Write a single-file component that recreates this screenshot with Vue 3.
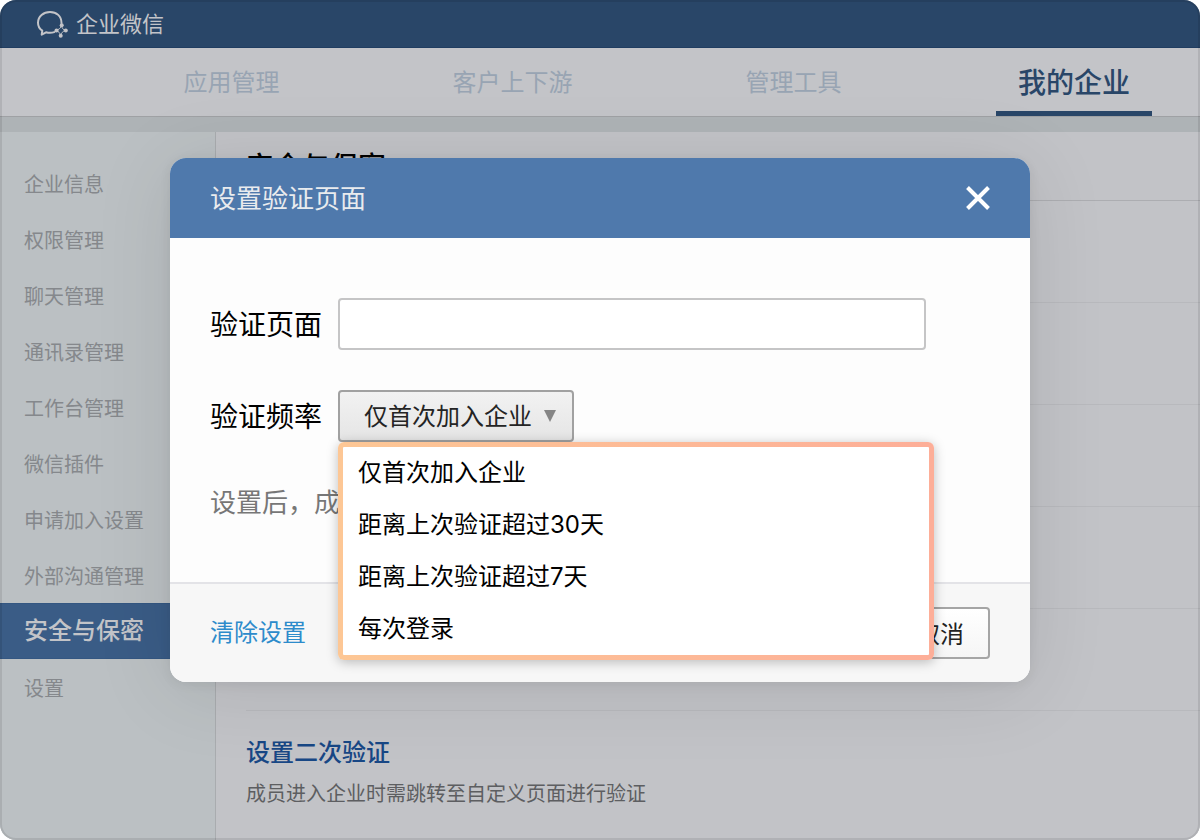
<script setup>
import { ref } from 'vue'

const tabs = ['应用管理', '客户上下游', '管理工具', '我的企业']
const activeTab = ref('我的企业')
const sections = ['企业信息', '权限管理', '聊天管理', '通讯录管理', '工作台管理', '微信插件', '申请加入设置', '外部沟通管理', '安全与保密', '设置']
const activeSection = ref('安全与保密')
const frequencies = ['仅首次加入企业', '距离上次验证超过30天', '距离上次验证超过7天', '每次登录']
const frequency = ref(frequencies[0])
const pageUrl = ref('')
const menuOpen = ref(true)
const dialogOpen = ref(true)

function choose(item) {
  frequency.value = item
  menuOpen.value = false
}
</script>

<template>
  <div class="page">
    <header class="topbar">
      <svg class="logo" viewBox="0 0 32 28" aria-hidden="true">
        <path d="M25.500 13C25.500 6 20.500 2 14 2S2 6.500 2 12.700c0 3.500 1.600 6.200 4.300 8l-.6 4 4.300-2.400c3 .8 5.800.7 8.300-.2" />
        <path class="thin" d="M25.500 15.500c.4 2.700 1.500 4.300 4.200 4.800-2.900.9-4.400 2.500-5 5.400-.7-2.800-2-4.500-4.900-5.200 2.900-.8 5.100-2.300 5.700-5Z" />
        <g class="dots"><circle cx="25.700" cy="15.300" r="2" /><circle cx="29.800" cy="20.400" r="2" /><circle cx="20.500" cy="20.500" r="2" /><circle cx="24.700" cy="25.700" r="2" /></g>
      </svg>
      <span>企业微信</span>
    </header>
    <nav class="tabs">
      <a v-for="tab in tabs" :key="tab" href="#" :class="{ active: tab === activeTab }" @click.prevent="activeTab = tab">{{ tab }}</a>
    </nav>
    <div class="content">
      <nav class="sidebar">
        <a v-for="item in sections" :key="item" href="#" :class="{ active: item === activeSection }" @click.prevent="activeSection = item">{{ item }}</a>
      </nav>
      <main>
        <h1>安全与保密</h1>
        <div class="rows">
          <div v-for="n in 5" :key="n" class="row"></div>
          <section class="row">
            <h2>设置二次验证</h2>
            <p>成员进入企业时需跳转至自定义页面进行验证</p>
          </section>
        </div>
      </main>
    </div>

    <div v-if="dialogOpen" class="overlay">
      <div class="dialog" role="dialog" aria-labelledby="dialog-title">
        <div class="dialog-head">
          <h2 id="dialog-title">设置验证页面</h2>
          <button class="close" type="button" aria-label="关闭" @click="dialogOpen = false">
            <svg viewBox="0 0 26 26" aria-hidden="true"><path d="M2.500 2.500 23.500 23.500M23.500 2.500 2.500 23.500" /></svg>
          </button>
        </div>
        <div class="dialog-body">
          <div class="field">
            <label for="page-url">验证页面</label>
            <input id="page-url" v-model="pageUrl" type="text">
          </div>
          <div class="field">
            <label for="frequency">验证频率</label>
            <div class="picker">
              <select id="frequency" v-model="frequency" @mousedown.prevent="menuOpen = !menuOpen">
                <option v-for="item in frequencies" :key="item">{{ item }}</option>
              </select>
              <svg class="arrow" viewBox="0 0 12 12" aria-hidden="true"><path d="M0 0h12L6 12Z" /></svg>
              <div v-if="menuOpen" class="menu">
                <button v-for="item in frequencies" :key="item" type="button" @click="choose(item)">{{ item }}</button>
              </div>
            </div>
          </div>
          <p class="hint">设置后，成</p>
        </div>
        <div class="dialog-foot">
          <a href="#" @click.prevent="pageUrl = ''">清除设置</a>
          <div class="actions">
            <button type="button" aria-label="确定"></button>
            <button type="button" @click="dialogOpen = false">取消</button>
          </div>
        </div>
      </div>
    </div>
  </div>
</template>

<style>
body {
  background: #fff;
}
</style>

<style scoped>
* {
  box-sizing: border-box;
}
.page {
  position: relative;
  display: flex;
  flex-direction: column;
  min-height: 100vh;
  overflow: hidden;
  border-radius: 16px;
  background: #aeb3b6;
  font-family: Inter, "Noto Sans CJK SC", sans-serif;
}
.page::after {
  content: "";
  position: absolute;
  inset: 0;
  border-radius: 16px;
  box-shadow: inset 0 0 0 2px rgba(0, 0, 0, 0.09);
  pointer-events: none;
}
h1, h2, p {
  margin: 0;
}
a {
  text-decoration: none;
}
button, input, select {
  font: inherit;
}
.topbar {
  display: flex;
  align-items: center;
  gap: 8px;
  height: 48px;
  padding-left: 36px;
  background: #294668;
  border-bottom: 1px solid #203d61;
  color: #c3c4c8;
  font-size: 22px;
  line-height: 32px;
}
.logo {
  width: 32px;
  height: 28px;
  fill: none;
  stroke: #c3c4c8;
  stroke-width: 2;
  stroke-linejoin: round;
  stroke-linecap: round;
}
.thin {
  stroke-width: 1;
}
.dots {
  fill: #c3c4c8;
  stroke: none;
}
.tabs {
  display: grid;
  grid-template-columns: repeat(3, 281fr) 266fr;
  height: 69px;
  padding-left: 91px;
  background: #c3c4c8;
  border-bottom: 1px solid #9fa1a4;
}
.tabs a {
  height: 68px;
  color: #98a4b3;
  font-size: 24px;
  line-height: 70px;
  text-align: center;
}
.tabs a.active {
  justify-self: end;
  width: 156px;
  margin-right: 48px;
  box-shadow: inset 0 -5px #294668;
  color: #294668;
  font-size: 28px;
  font-weight: 500;
}
.content {
  flex: 1;
  display: flex;
  margin-top: 15px;
}
.sidebar {
  flex: none;
  display: flex;
  flex-direction: column;
  width: 216px;
  padding-top: 23px;
  background: #bbc0c3;
  border-right: 1px solid #a9acaf;
}
.sidebar a {
  height: 56px;
  padding-left: 24px;
  color: #85888c;
  font-size: 20px;
  line-height: 60px;
}
.sidebar a.active {
  background: #3a5c86;
  box-shadow: inset 0 1px #345782, inset 0 -1px #345782;
  color: #c3c4c8;
  font-size: 24px;
  font-weight: 500;
  line-height: 56px;
}
main {
  flex: 1;
  background: #c2c3c7;
}
h1 {
  height: 69px;
  padding-left: 30px;
  border-bottom: 1px solid #acadb1;
  color: #000;
  font-size: 28px;
  font-weight: 500;
  line-height: 70px;
}
.rows {
  padding-left: 30px;
}
.row {
  height: 102px;
  padding-top: 22px;
}
.row:not(:last-child) {
  border-bottom: 1px solid #b8b9bd;
}
.row h2 {
  color: #184785;
  font-size: 24px;
  font-weight: 500;
  line-height: 40px;
}
.row p {
  color: #5d5e61;
  font-size: 20px;
  line-height: 42px;
}
.overlay {
  position: absolute;
  inset: 0;
  display: flex;
  align-items: center;
  justify-content: center;
}
.dialog {
  width: 860px;
  border-radius: 16px;
  background: #fdfdfd;
  box-shadow: 0 8px 80px rgba(0, 0, 0, 0.1), 0 2px 12px rgba(0, 0, 0, 0.07);
}
.dialog-head {
  display: flex;
  align-items: center;
  justify-content: space-between;
  height: 80px;
  padding: 0 39px 0 40px;
  border-radius: 16px 16px 0 0;
  background: #4f79ac;
}
.dialog-head h2 {
  padding-top: 2px;
  color: #e9ebee;
  font-size: 26px;
  font-weight: 400;
  line-height: 40px;
}
.close {
  display: flex;
  padding: 0;
  border: 0;
  background: none;
}
.close svg {
  width: 26px;
  height: 26px;
  fill: none;
  stroke: #fff;
  stroke-width: 4;
}
.dialog-body {
  display: flex;
  flex-direction: column;
  gap: 40px;
  padding: 60px 40px;
}
.field {
  display: flex;
  align-items: center;
  gap: 16px;
}
.field label {
  width: 112px;
  padding-top: 2px;
  color: #000;
  font-size: 28px;
  line-height: 40px;
}
.field input {
  width: 588px;
  height: 52px;
  padding: 0 16px;
  border: 2px solid #c5c5c6;
  border-radius: 4px;
  background: #fff;
  font-size: 24px;
}
.picker {
  position: relative;
  width: 236px;
  height: 52px;
}
select {
  appearance: none;
  width: 100%;
  height: 100%;
  padding: 0 22px 0 24px;
  border: 2px solid #a1a1a1;
  border-radius: 4px;
  background: linear-gradient(#f2f2f2, #e5e5e5);
  color: #242424;
  font-size: 24px;
}
.arrow {
  position: absolute;
  top: 20px;
  right: 18px;
  width: 12px;
  height: 12px;
  fill: #858585;
  pointer-events: none;
}
.menu {
  position: absolute;
  z-index: 2;
  top: 52px;
  left: 0;
  width: 596px;
  border: 5px solid transparent;
  border-radius: 6px;
  background: linear-gradient(#fff, #fff) padding-box, linear-gradient(90deg, #fdc795, #fdae98) border-box;
  box-shadow: 0 2px 12px rgba(0, 0, 0, 0.26);
}
.menu button {
  display: block;
  width: 100%;
  padding: 0 15px;
  border: 0;
  background: none;
  color: #000;
  font-size: 24px;
  line-height: 52px;
  text-align: left;
}
.hint {
  color: #777;
  font-size: 26px;
  line-height: 42px;
}
.dialog-foot {
  display: flex;
  align-items: center;
  justify-content: space-between;
  height: 100px;
  margin-top: -2px;
  padding: 0 40px;
  border-top: 2px solid #e3e3e7;
  border-radius: 0 0 16px 16px;
  background: #f7f7f7;
}
.dialog-foot a {
  color: #2d8bcb;
  font-size: 24px;
  line-height: 40px;
}
.actions {
  display: flex;
  gap: 20px;
}
.actions button {
  width: 100px;
  height: 52px;
  padding: 0 0 2px;
  border: 2px solid #a5a5a5;
  border-radius: 4px;
  background: linear-gradient(#fff, #f5f5f5);
  color: #222;
  font-size: 24px;
}
</style>
